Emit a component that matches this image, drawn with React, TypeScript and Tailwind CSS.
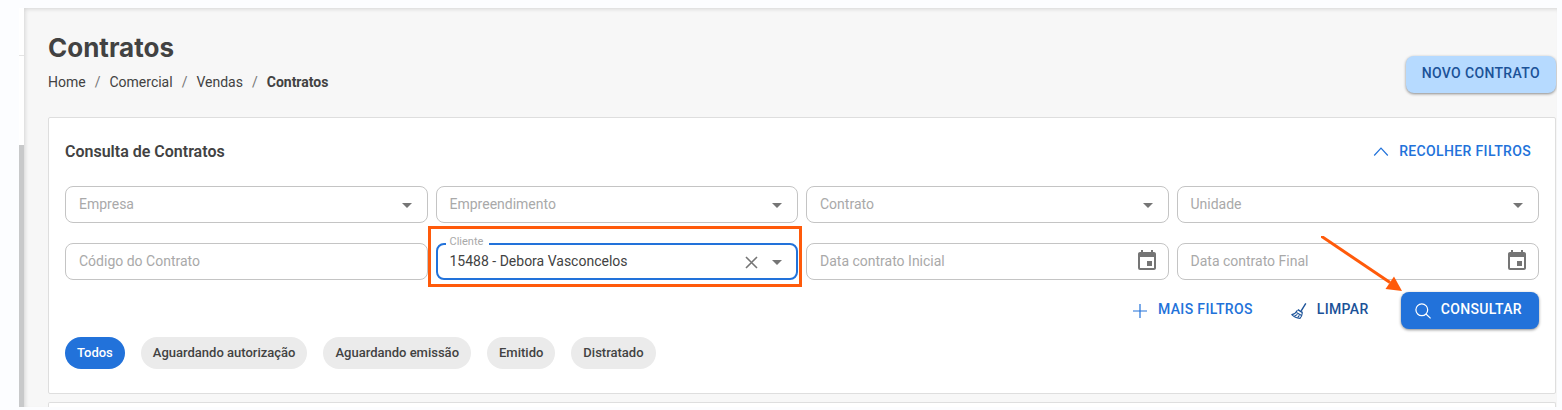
import React, { useState } from "react";
import { MdArrowDropDown, MdEvent } from "react-icons/md";

interface FieldProps {
  id: string;
  label: string;
}

interface SelectFieldProps extends FieldProps {
  options?: string[];
}

const STATUS = ["Todos", "Aguardando autorização", "Aguardando emissão", "Emitido", "Distratado"];

const BREADCRUMBS = ["Home", "Comercial", "Vendas"];

const PlusIcon = () => (
  <svg className="size-4" viewBox="0 0 16 16" fill="none" stroke="currentColor" strokeWidth="1.2">
    <path d="M8 1v14M1 8h14" />
  </svg>
);

const ChevronIcon = () => (
  <svg className="size-4" viewBox="0 0 16 16" fill="none" stroke="currentColor" strokeWidth="1.2">
    <path d="M1.2 12.500 8 5.200 14.8 12.500" />
  </svg>
);

const SearchIcon = () => (
  <svg className="size-4" viewBox="0 0 16 16" fill="none" stroke="currentColor" strokeWidth="1.2">
    <circle cx="6.8" cy="6.8" r="5.9" />
    <path d="m11 11 4.6 4.4" />
  </svg>
);

const BroomIcon = () => (
  <svg className="size-4" viewBox="0 0 16 16" fill="none" stroke="currentColor" strokeWidth="1.1" strokeLinejoin="round">
    <path d="M14.8.4 10.2 7.8" strokeWidth="1.4" />
    <path d="M6.8 6.600 11.600 9.700" strokeWidth="1.4" />
    <path d="M6.400 7.200C5 9.800 3 11.200.8 11.600c2 2.200 5 3.600 8.200 3.800 1.500-1.600 2.200-3.400 2.300-5.600" />
    <path d="M5.400 9.600 10.600 12.400M3.400 13.200 6.400 11.400M6.600 14.600 8.400 12.400" />
  </svg>
);

const SelectField: React.FC<SelectFieldProps> = ({ id, label, options = [] }) => (
  <div className="relative">
    <select
      id={id}
      defaultValue=""
      required
      className="peer block h-[37px] w-full appearance-none rounded-lg border border-[#c4c4c4] bg-white pr-9 pb-px pl-[13px]"
    >
      <option value=""></option>
      {options.map((option) => (
        <option key={option}>{option}</option>
      ))}
    </select>
    <label htmlFor={id} className="pointer-events-none absolute top-2 left-[14px] leading-5 text-[#a9a9a9] peer-valid:hidden">
      {label}
    </label>
    <MdArrowDropDown className="pointer-events-none absolute top-[7px] right-[9px] size-6 text-[#757575]" />
  </div>
);

const TextField: React.FC<FieldProps> = ({ id, label }) => (
  <div className="relative">
    <input
      id={id}
      type="text"
      required
      className="peer block h-[37px] w-full rounded-lg border border-[#c4c4c4] bg-white px-[13px] pb-px"
    />
    <label htmlFor={id} className="pointer-events-none absolute top-2 left-[14px] leading-5 text-[#a9a9a9] peer-valid:hidden">
      {label}
    </label>
  </div>
);

const DateField: React.FC<FieldProps> = ({ id, label }) => (
  <div className="relative">
    <TextField id={id} label={label} />
    <button type="button" aria-label={label} className="absolute top-[6px] right-[10px] text-[#757575]">
      <MdEvent className="size-6" />
    </button>
  </div>
);

const ClientField: React.FC = () => {
  const [client, setClient] = useState("15488");

  return (
    <div className="relative">
      <select
        id="cliente"
        value={client}
        onChange={(e) => setClient(e.target.value)}
        className="block h-[37px] w-full appearance-none rounded-lg border-2 border-[#2272da] bg-white pr-16 pb-px pl-3 text-[#424242] outline-none"
      >
        <option value=""></option>
        <option value="15488">15488 - Debora Vasconcelos</option>
      </select>
      <label htmlFor="cliente" className="absolute -top-2 left-[10px] bg-white pr-1.5 pl-1 text-[11px] leading-[14px] text-[#a9a9a9]">
        Cliente
      </label>
      <button
        type="button"
        aria-label="Limpar cliente"
        onClick={() => setClient("")}
        className="absolute top-[11px] right-[39px] text-[#757575]"
      >
        <svg className="size-4" viewBox="0 0 16 16" fill="none" stroke="currentColor" strokeWidth="1.6">
          <path d="m3 3 11 11M14 3 3 14" />
        </svg>
      </button>
      <MdArrowDropDown className="pointer-events-none absolute top-[7px] right-[9px] size-6 text-[#757575]" />
      {/* highlight around the field */}
      <div className="pointer-events-none absolute -top-[17px] -right-1 -bottom-[7px] -left-2 border-3 border-[#ff5a0a]" />
    </div>
  );
};

export default function App() {
  const [status, setStatus] = useState("Todos");

  return (
    <div className="flex h-screen overflow-hidden bg-[#fcfdff] pt-2 pr-[5px] pb-[3px] pl-[19px] font-['Roboto',sans-serif] text-sm text-[#424242]">
      {/* edge of the side menu */}
      <aside className="flex w-[5px] shrink-0 flex-col bg-white">
        <div className="h-12 border-b border-[#e4e4e4]" />
        <div className="mt-[89px] flex-1 bg-[#c8c9ca]" />
      </aside>

      <main className="flex min-w-0 flex-1 flex-col overflow-hidden bg-[#f7f7f7] pt-6 pr-px pl-6 shadow-[inset_2px_2px_4px_-1px_rgba(0,0,0,0.14)]">
        <header className="flex items-end justify-between">
          <div className="pb-px">
            <h1 className="font-['Inter',sans-serif] text-[26px] leading-8 font-bold">Contratos</h1>
            <nav className="mt-2 flex gap-2 leading-5">
              {BREADCRUMBS.map((item) => (
                <React.Fragment key={item}>
                  <a href="#">{item}</a>
                  <span className="px-px text-[#757575]">/</span>
                </React.Fragment>
              ))}
              <span className="font-bold">Contratos</span>
            </nav>
          </div>
          <button
            type="button"
            className="h-[37px] rounded-lg bg-[#b6daff] px-4 pb-[3px] font-medium tracking-wide text-[#1b5298] shadow-[0_1px_3px_rgba(0,0,0,0.45)]"
          >
            NOVO CONTRATO
          </button>
        </header>

        <section className="mt-6 shrink-0 rounded-xs border border-[#dedede] bg-white px-4 pt-4 pb-6">
          <div className="flex h-9 items-center justify-between">
            <h2 className="pb-px text-base font-semibold">Consulta de Contratos</h2>
            <button type="button" className="flex items-center gap-[10px] px-2 pb-[3px] font-medium tracking-wide text-[#2272da]">
              <ChevronIcon />
              RECOLHER FILTROS
            </button>
          </div>

          <div className="mt-4 grid grid-cols-4 gap-x-2 gap-y-5">
            <SelectField id="empresa" label="Empresa" />
            <SelectField id="empreendimento" label="Empreendimento" />
            <SelectField id="contrato" label="Contrato" />
            <SelectField id="unidade" label="Unidade" />
            <TextField id="codigo" label="Código do Contrato" />
            <ClientField />
            <DateField id="data-inicial" label="Data contrato Inicial" />
            <DateField id="data-final" label="Data contrato Final" />
          </div>

          <div className="mt-3 flex h-[37px] justify-end gap-4 font-medium tracking-wide">
            <button type="button" className="flex items-center gap-[10px] px-1.5 text-[#2272da]">
              <PlusIcon />
              <span className="pb-[3px]">MAIS FILTROS</span>
            </button>
            <button type="button" className="flex items-center gap-[10px] px-4 text-[#1b5298]">
              <BroomIcon />
              <span className="pb-[3px]">LIMPAR</span>
            </button>
            <div className="relative">
              <button
                type="button"
                className="flex h-full items-center gap-[10px] rounded-lg bg-[#2272da] pr-[17px] pl-[14px] text-white shadow-[0_1px_3px_rgba(0,0,0,0.45)]"
              >
                <SearchIcon />
                <span className="pb-[3px]">CONSULTAR</span>
              </button>
              {/* arrow pointing at the button */}
              <svg className="pointer-events-none absolute -top-14 -left-20 h-14 w-[82px]" viewBox="0 0 82 56" fill="#ff5a0a">
                <path d="M0 0 69 46.500" stroke="#ff5a0a" strokeWidth="3" />
                <path d="M81 55 64.500 53 73 40.500Z" />
              </svg>
            </div>
          </div>

          <div className="mt-2 flex gap-4">
            {STATUS.map((item) => (
              <button
                key={item}
                type="button"
                onClick={() => setStatus(item)}
                className={`h-8 rounded-full px-3 text-[13px] font-medium ${
                  status === item ? "bg-[#2272da] text-white" : "bg-[#ebebeb]"
                }`}
              >
                {item}
              </button>
            ))}
          </div>
        </section>

        <section className="mt-2 min-h-0 flex-1 rounded-t-xs border border-b-0 border-[#dedede] bg-white" />
      </main>
    </div>
  );
}
